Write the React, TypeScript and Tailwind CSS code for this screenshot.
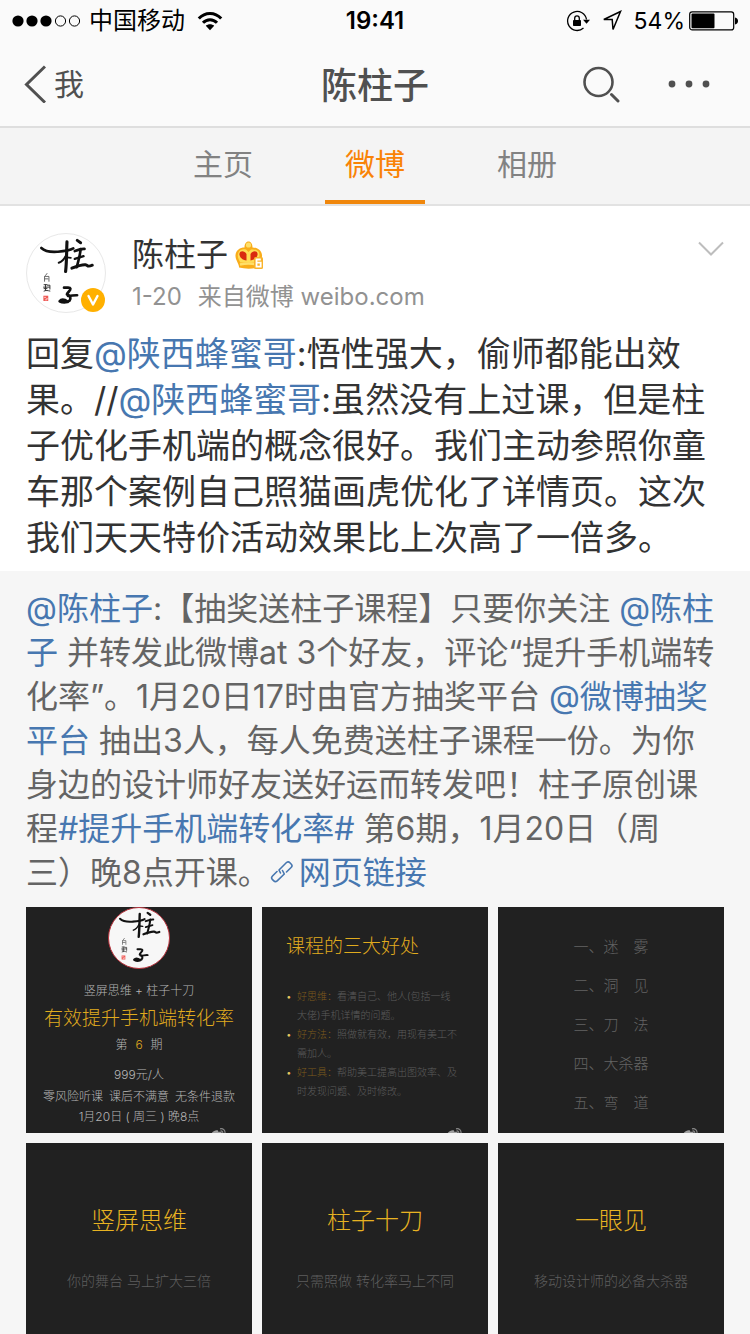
import type { ReactNode } from "react"
import clsx from "clsx"

const tabs = ["主页", "微博", "相册"]

const benefits = [
  { title: "好思维：", text: "看清自己、他人(包括一线大佬)手机详情的问题。" },
  { title: "好方法：", text: "照做就有效，用现有美工不需加人。" },
  { title: "好工具：", text: "帮助美工提高出图效率、及时发现问题、及时修改。" },
]

const chapters = ["一、迷　雾", "二、洞　见", "三、刀　法", "四、大杀器", "五、弯　道"]

const covers = [
  { title: "竖屏思维", text: "你的舞台 马上扩大三倍" },
  { title: "柱子十刀", text: "只需照做 转化率马上不同" },
  { title: "一眼见", text: "移动设计师的必备大杀器" },
]

function StatusBar() {
  return (
    <div className="grid h-[42px] grid-cols-3 items-center pl-3 pr-3 text-black">
      <div className="flex items-center gap-2">
        <svg width="69" height="14" viewBox="0 0 69 14" aria-hidden="true">
          <circle cx="6" cy="7" r="5.6" />
          <circle cx="20" cy="7" r="5.6" />
          <circle cx="34" cy="7" r="5.6" />
          <circle cx="48.500" cy="7" r="5.1" fill="none" stroke="black" />
          <circle cx="62.500" cy="7" r="5.1" fill="none" stroke="black" />
        </svg>
        <span className="text-2xl leading-8">中国移动</span>
        <svg className="ml-1" width="26" height="20" viewBox="0 0 26 20" fill="none" stroke="black" strokeWidth="3" aria-hidden="true">
          <path d="M1.800 7.600C8 .8 18 .8 24.200 7.600" />
          <path d="M6 11.800c4-4.200 10-4.200 14 0" />
          <path d="M13 19.200L8.800 14.800c2.400-2 6-2 8.400 0z" fill="black" stroke="none" />
        </svg>
      </div>
      <span className="text-center text-2xl leading-8 font-semibold">19:41</span>
      <div className="flex items-center justify-end">
        <svg width="24" height="22" viewBox="0 0 24 22" aria-hidden="true">
          <path d="M20.500 9.500A9.500 9.500 0 1 0 17.500 18" fill="none" stroke="black" strokeWidth="1.300" />
          <path d="M17 9.800h7l-3.500 4z" />
          <rect x="7" y="10" width="8" height="6" rx=".8" />
          <path d="M8.700 10V8.200a2.300 2.300 0 0 1 4.600 0V10" fill="none" stroke="black" strokeWidth="1.300" />
        </svg>
        <svg className="ml-3" width="20" height="22" viewBox="0 0 20 22" fill="none" stroke="black" strokeWidth="1.500" aria-hidden="true">
          <path d="M18.500 1.500L1.800 9.500h8.400l.8 10z" />
        </svg>
        <span className="ml-3 text-[23px] leading-8">54%</span>
        <svg className="ml-1" width="49" height="20" viewBox="0 0 49 20" aria-hidden="true">
          <rect x=".7" y=".9" width="44" height="18" rx="2.500" fill="none" stroke="black" strokeWidth="1.200" />
          <rect x="2.500" y="2.600" width="23" height="14.600" rx="1" />
          <path d="M46 6.500q3 .8 3 3.500t-3 3.500z" />
        </svg>
      </div>
    </div>
  )
}

function NavBar() {
  return (
    <div className="grid h-[84px] grid-cols-3 items-center px-6 text-[#505050]">
      <button type="button" className="flex items-center gap-2 text-3xl leading-10">
        <svg width="22" height="38" viewBox="0 0 22 38" fill="none" stroke="currentColor" strokeWidth="3" aria-hidden="true">
          <path d="M21 1.500L2.500 19.500 21 37.500" />
        </svg>
        我
      </button>
      <h1 className="pt-1 text-center text-4xl leading-12 font-medium">陈柱子</h1>
      <div className="flex items-center justify-end gap-12 pr-4">
        <button type="button" aria-label="搜索">
          <svg width="38" height="38" viewBox="0 0 38 38" fill="none" stroke="currentColor" strokeWidth="2.600" strokeLinecap="round">
            <circle cx="16.500" cy="17" r="14" />
            <path d="M29.500 29.500l6.500 6.500" strokeWidth="3" />
          </svg>
        </button>
        <button type="button" aria-label="更多">
          <svg width="42" height="10" viewBox="0 0 42 10" fill="currentColor">
            <circle cx="4" cy="5" r="3.400" />
            <circle cx="21" cy="5" r="3.400" />
            <circle cx="38" cy="5" r="3.400" />
          </svg>
        </button>
      </div>
    </div>
  )
}

function TabBar() {
  return (
    <nav className="flex h-[78px] justify-center gap-[52px] border-b-2 border-[#e2e2e2] bg-[#f4f4f4]">
      {tabs.map((tab) => (
        <button
          key={tab}
          type="button"
          className={clsx(
            "w-[100px] border-b-4 text-3xl leading-10",
            tab === "微博" ? "border-[#f0870c] text-[#f98306]" : "border-transparent text-[#828282]",
          )}
        >
          {tab}
        </button>
      ))}
    </nav>
  )
}

// Brush-written 柱子 with the small signature and seal
function Calligraphy({ className }: { className?: string }) {
  return (
    <svg className={className} viewBox="0 0 80 80" fill="none" stroke="#111" strokeLinecap="round" strokeLinejoin="round" aria-hidden="true">
      <g strokeWidth="2.700">
        <path d="M14.700 14.300C19 18.500 25 18.600 31 18.200S43 17.500 47.500 14.800" />
        <path d="M41 8C40.500 18 40.800 28 39.600 38.500" strokeWidth="3.200" />
        <path d="M40 22C38 26 36 28.500 32.500 29.500" strokeWidth="2" />
        <path d="M41 24L45 24.500" strokeWidth="1.800" />
        <path d="M51.500 6.500L55 9" strokeWidth="3" />
        <path d="M49 17.500C53 16 56 15 59 15.300" />
        <path d="M55 15.500C54.500 22 52.500 28 51 34" />
        <path d="M49 25.500L58 22.800" strokeWidth="2.400" />
        <path d="M46 35C51 33 57 31.200 60 31.500S61 34.500 67 32" strokeWidth="3" />
      </g>
      <path d="M38 55C41 55.500 44 54 44.500 56S41 60 41 62C44.500 63 45.500 66 43.500 68.500C40.500 71 36 70.500 33.500 69C35.500 66.500 39 67.500 42 69.500" strokeWidth="2.800" />
      <path d="M42 63.500C45 64 48 62.500 51.500 62.800" strokeWidth="2.600" />
      <path d="M20.500 40.500l-1.500 2M18 43.500h4.500v5M18 44v4.500M18.500 46h3" stroke="#555" strokeWidth=".9" />
      <path d="M17.500 52h3M17 54.500h6M19 52v6M21 52.500h2.500v4M17.500 58.500c2-1 4-.5 6 0M17.500 56h3" stroke="#333" strokeWidth="1" />
      <rect x="16.800" y="63.300" width="5" height="5.400" fill="#ef5a55" stroke="none" />
      <path d="M18 65h1M20 66.500h1M19 67.500h1" stroke="#fff" strokeWidth=".7" />
    </svg>
  )
}

function CrownIcon() {
  return (
    <svg width="30" height="30" viewBox="0 0 30 30" role="img" aria-label="微博会员 6">
      <path d="M5 27.500C5.500 24 1 20 1.500 15S6 7.500 10.500 7.500C10.500 4 12 1.500 14.500 1.500S18.500 4 18.500 7.500C23 7.500 27.500 10 28 15S24.500 24 25 27.500C18 29 11 29 5 27.500z" fill="#f9ad1a" />
      <path d="M6.300 22.500C4 18.500 3 15.500 4.500 12.500S8.500 9 12 9.500L14.500 12 17 9.500C20.500 9 24 10 25 12.500S25.500 18.500 23.200 22.500z" fill="#ffdd55" />
      <circle cx="14.500" cy="5" r="2.600" fill="#ffe06a" />
      <path d="M12.500 20.500C8 20 5 16.500 5.500 13.500S10.500 10.500 12.500 14z" fill="#d92a10" />
      <path d="M16.500 20.500C21 20 24 16.500 23.500 13.500S18.500 10.500 16.500 14z" fill="#d92a10" />
      <path d="M6 24.500C11 23.300 18 23.300 23 24.500" fill="none" stroke="#ffe06a" strokeWidth="2.500" />
      <rect x="20" y="17" width="9" height="12" rx="1.500" fill="#f9b32b" />
      <path d="M26.800 19.500H22.500v7.200h4.200v-4h-4" fill="none" stroke="#fff" strokeWidth="1.800" />
    </svg>
  )
}

function LinkIcon() {
  return (
    <svg className="mr-1 inline-block align-baseline" width="25" height="24" viewBox="0 0 25 24" fill="none" stroke="currentColor" strokeWidth="1.600" strokeLinecap="round" strokeLinejoin="round" aria-hidden="true">
      <path d="M10.500 13l-1.500-3 7.500-7.500c1.200-1 2.300-1 3.400.2l1.400 1.500c1 1.100 1 2.200-.2 3.300L16.500 12" />
      <path d="M12.500 10.500l1.800 3.500-7.100 6.800c-1.200 1.100-2.300 1.200-3.400.1l-1.500-1.500c-1-1.100-1-2.200.2-3.400L7 11.500" />
    </svg>
  )
}

// Only the top of the logo shows above the bottom edge of a thumbnail
function Watermark() {
  return (
    <svg className="absolute right-6 bottom-0" width="18" height="5" viewBox="0 0 18 5" aria-hidden="true">
      <path d="M1 6C3 3 6 1.500 8 2.500L8.500 4c2-.8 3.500-.2 3.500 2z" fill="#a0a0a0" />
      <path d="M10 .8c3-.8 5.500 1.500 5 5M10.500 3c1.500-.3 2.500.8 2.300 2.500" fill="none" stroke="#888" strokeWidth="1.200" />
    </svg>
  )
}

function Mention({ children }: { children: ReactNode }) {
  return (
    <a href="#" className="text-[#4777b0]">
      {children}
    </a>
  )
}

function Thumb({ children, className }: { children: ReactNode; className?: string }) {
  return (
    <a href="#" className={clsx("relative flex aspect-square flex-col overflow-hidden bg-[#212121] font-light", className)}>
      {children}
    </a>
  )
}

function PostHeader() {
  return (
    <header className="flex gap-[26px] px-[26px] pt-[27px]">
      <div className="relative size-20 shrink-0 rounded-full border border-[#e8e8e8]">
        <Calligraphy className="size-full" />
        <svg className="absolute right-0 bottom-0" width="24" height="24" viewBox="0 0 24 24" role="img" aria-label="认证用户">
          <circle cx="12" cy="12" r="12" fill="#ffb000" />
          <path d="M7.500 8L12 16.500 16.500 8" fill="none" stroke="#fff" strokeWidth="2.400" strokeLinecap="round" strokeLinejoin="round" />
        </svg>
      </div>
      <div className="flex-1">
        <div className="flex items-center gap-1.5">
          <a href="#" className="text-[32px] leading-[44px] text-[#333]">陈柱子</a>
          <CrownIcon />
        </div>
        <p className="flex gap-4 text-2xl leading-[40px] text-[#929292]">
          <time>1-20</time>
          <span>来自微博 weibo.com</span>
        </p>
      </div>
      <button type="button" aria-label="展开菜单" className="mt-2 self-start">
        <svg width="26" height="16" viewBox="0 0 26 16" fill="none" stroke="#bdbdbd" strokeWidth="2">
          <path d="M1 1.500l12 12 12-12" />
        </svg>
      </button>
    </header>
  )
}

function Gallery() {
  return (
    <div className="grid grid-cols-3 gap-2.5 pt-3">
      <Thumb className="items-center text-xs text-[#b5b5b5]">
        <span className="size-[62px] shrink-0 rounded-full border border-[#b8323c] bg-[#f7f7f7]">
          <Calligraphy className="size-full" />
        </span>
        <span className="mt-3.5 leading-4">竖屏思维 + 柱子十刀</span>
        <span className="mt-2 text-[19px] leading-6 text-[#e0ab1e]">有效提升手机端转化率</span>
        <span className="mt-1 flex gap-2 leading-5">
          第<span className="text-[#e0ab1e]">6</span>期
        </span>
        <span className="mt-2 leading-6">999元/人</span>
        <span className="flex gap-1.5 leading-5">
          <span>零风险听课</span>
          <span>课后不满意</span>
          <span>无条件退款</span>
        </span>
        <span className="leading-5">1月20日 ( 周三 ) 晚8点</span>
        <Watermark />
      </Thumb>

      <Thumb className="px-6 pt-6">
        <span className="text-[19px] leading-8 text-[#e0ab1e]">课程的三大好处</span>
        <span className="mt-6 flex flex-col text-[10px] leading-[19px] text-[#5c5c5c]">
          {benefits.map((item) => (
            <span key={item.title} className="flex">
              <span className="w-[11px] shrink-0 text-[#e6c860]">•</span>
              <span className="w-[162px] [text-spacing-trim:space-all]">
                <span className="text-[#7d5a1c]">{item.title}</span>
                {item.text}
              </span>
            </span>
          ))}
        </span>
        <Watermark />
      </Thumb>

      <Thumb className="items-center pt-5 text-[15px] leading-[39px] text-[#646464]">
        {chapters.map((chapter) => (
          <span key={chapter}>{chapter}</span>
        ))}
        <Watermark />
      </Thumb>

      {covers.map((cover) => (
        <Thumb key={cover.title} className="items-center pt-[62px]">
          <span className="text-2xl leading-8 text-[#e8b322]">{cover.title}</span>
          <span className="mt-8 text-sm leading-6 text-[#5e5e5e]">{cover.text}</span>
        </Thumb>
      ))}
    </div>
  )
}

export default function App() {
  return (
    <div className="flex h-screen flex-col bg-white font-['Inter','Noto_Sans_CJK_SC',sans-serif]">
      <div className="shrink-0 border-b-2 border-[#dedede] bg-[#fafafa]">
        <StatusBar />
        <NavBar />
      </div>
      <div className="shrink-0">
        <TabBar />
      </div>
      <main className="min-h-0 flex-1 overflow-y-auto [scrollbar-width:none]">
        <article>
          <PostHeader />
          <p className="px-[26px] pt-3.5 pb-2.5 text-[34px] leading-[46px] text-[#333]">
            回复<Mention>@陕西蜂蜜哥</Mention>:悟性强大，偷师都能出效果。//<Mention>@陕西蜂蜜哥</Mention>
            :虽然没有上过课，但是柱子优化手机端的概念很好。我们主动参照你童车那个案例自己照猫画虎优化了详情页。这次我们天天特价活动效果比上次高了一倍多。
          </p>
          <div className="bg-[#f6f6f6] px-[26px] pt-4 pb-6">
            <p className="pr-1.5 text-[32px] leading-[44px] text-[#646464] [text-spacing-trim:space-all]">
              <Mention>@陈柱子</Mention>:【抽奖送柱子课程】只要你关注 <Mention>@陈柱子</Mention>{" "}
              并转发此微博at 3个好友，评论“提升手机端转化率”。1月20日17时由官方抽奖平台{" "}
              <Mention>@微博抽奖平台</Mention>{" "}
              抽出3人，每人免费送柱子课程一份。为你身边的设计师好友送好运而转发吧！柱子原创课程
              <Mention>#提升手机端转化率#</Mention> 第6期，1月20日（周三）晚8点开课。
              <Mention>
                <LinkIcon />
                网页链接
              </Mention>
            </p>
            <Gallery />
          </div>
        </article>
      </main>
    </div>
  )
}
